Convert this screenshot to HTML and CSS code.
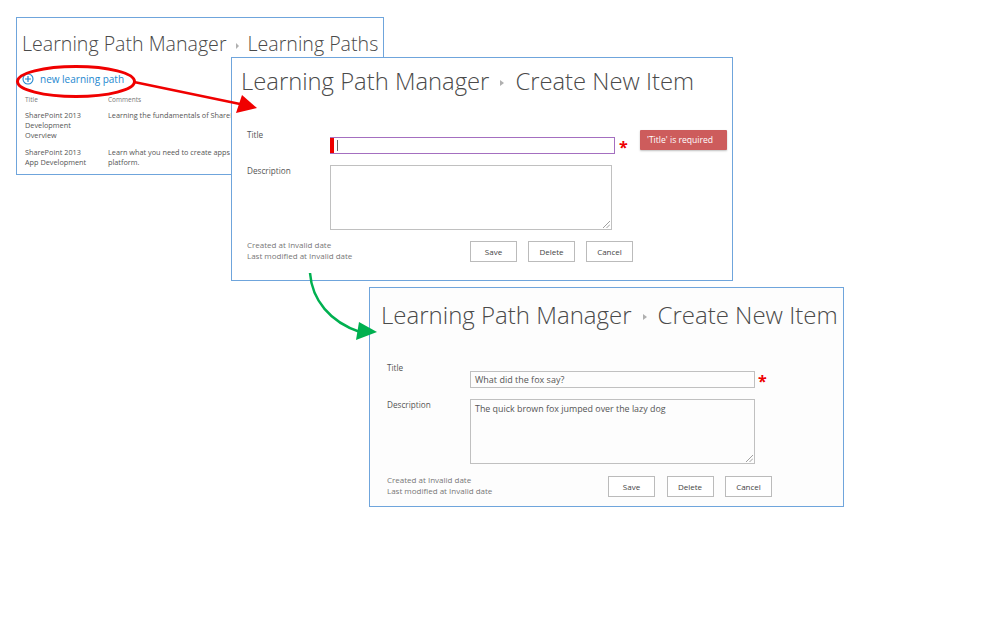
FILE: index.html
```html
<!DOCTYPE html>
<html lang="en">
<head>
<meta charset="utf-8">
<title>Learning Path Manager</title>
<link rel="stylesheet" href="styles.css">
</head>
<body>
<div class="canvas">
  <section class="win win-list">
    <h1 class="crumb"><span>Learning Path Manager</span><i class="sep"></i><span>Learning Paths</span></h1>
    <div class="new-link">
      <svg class="plus" width="12" height="12" viewBox="0 0 12 12"><circle cx="6" cy="6" r="5" fill="none" stroke="#2488cf" stroke-width="1.1"/><path d="M6 3v6M3 6h6" stroke="#2488cf" stroke-width="1.2"/></svg>
      <span>new learning path</span>
    </div>
    <div class="list">
      <div class="list-head">Title</div><div class="list-head">Comments</div>
      <div class="cell">SharePoint 2013<br>Development<br>Overview</div><div class="cell">Learning the fundamentals of SharePoint development</div>
      <div class="cell">SharePoint 2013<br>App Development</div><div class="cell">Learn what you need to create apps for the SharePoint<br>platform.</div>
    </div>
  </section>

  <section class="win win-error">
    <h1 class="crumb"><span>Learning Path Manager</span><i class="sep"></i><span>Create New Item</span></h1>
    <div class="form">
      <label class="lbl lbl-title">Title</label>
      <div class="field-row">
        <div class="input input-error"><i class="err-bar"></i><i class="caret"></i></div>
        <span class="star">*</span>
        <div class="tip">'Title' is required</div>
      </div>
      <label class="lbl">Description</label>
      <div class="area area-error"><svg class="grip" width="7" height="7" viewBox="0 0 7 7"><path d="M0 7L7 0M3.500 7L7 3.500" stroke="#888" stroke-width=".8"/></svg></div>
    </div>
    <div class="foot">
      <div class="meta">Created at Invalid date<br>Last modified at Invalid date</div>
      <div class="btns"><button class="btn">Save</button><button class="btn">Delete</button><button class="btn">Cancel</button></div>
    </div>
  </section>

  <section class="win win-ok">
    <h1 class="crumb"><span>Learning Path Manager</span><i class="sep"></i><span>Create New Item</span></h1>
    <div class="form">
      <label class="lbl lbl-title">Title</label>
      <div class="field-row">
        <div class="input">What did the fox say?</div>
        <span class="star">*</span>
      </div>
      <label class="lbl">Description</label>
      <div class="area">The quick brown fox jumped over the lazy dog<svg class="grip" width="7" height="7" viewBox="0 0 7 7"><path d="M0 7L7 0M3.500 7L7 3.500" stroke="#888" stroke-width=".8"/></svg></div>
    </div>
    <div class="foot">
      <div class="meta">Created at Invalid date<br>Last modified at Invalid date</div>
      <div class="btns"><button class="btn">Save</button><button class="btn">Delete</button><button class="btn">Cancel</button></div>
    </div>
  </section>

  <svg class="marks" width="1008" height="630" viewBox="0 0 1008 630">
    <ellipse cx="76" cy="81.500" rx="58.500" ry="15" fill="none" stroke="#f00000" stroke-width="3"/>
    <path d="M134 82L240 104" fill="none" stroke="#f00000" stroke-width="2.500"/>
    <path d="M242 95L257 108L236 113Z" fill="#f00000"/>
    <path d="M310 273C312 300 330 322 360 332" fill="none" stroke="#00b050" stroke-width="2.500"/>
    <path d="M359 322L377 332L356 340Z" fill="#00b050"/>
  </svg>
</div>
</body>
</html>
```
FILE: styles.css
```css
* { box-sizing: border-box; }
html, body { margin: 0; padding: 0; background: #fff; }
body { font-family: "Open Sans", "Liberation Sans", sans-serif; color: #444; }
.canvas { position: relative; width: 1008px; height: 630px; overflow: hidden; }

.win { position: absolute; background: #fff; border: 1px solid #6fa5dc; overflow: hidden; }
.win-list { left: 16px; top: 17px; width: 368px; height: 158px; padding: 12px 0 0 5px; }
.win-error { left: 231px; top: 57px; width: 502px; height: 224px; padding: 7px 0 0 9px; }
.win-ok { left: 369px; top: 287px; width: 475px; height: 220px; padding: 11px 0 0 11px; background: #fdfdfd; }

.crumb { display: flex; align-items: center; margin: 0; font-weight: 300; font-size: 24px; line-height: 32px; color: #4a4a4a; white-space: nowrap; }
.win-error .crumb { font-size: 23.800px; }
.win-list .crumb { font-size: 19.600px; line-height: 28px; }
.sep { width: 0; height: 0; margin: 3px 11px 0 11px; border-left: 4px solid #b0b0b0; border-top: 3px solid transparent; border-bottom: 3px solid transparent; }
.win-list .sep { margin: 3px 9px 0 9px; border-left-width: 3px; }

.new-link { display: flex; align-items: center; gap: 6px; margin-top: 13px; font-size: 10px; line-height: 16px; color: #2488cf; }

.list { display: grid; grid-template-columns: 83px 1fr; margin: 8px 0 0 3px; font-size: 7.300px; line-height: 10px; color: #555; }
.list-head { font-size: 6.500px; line-height: 9px; color: #777; margin-bottom: 6px; }
.cell { margin-bottom: 7px; white-space: nowrap; }

.form { display: grid; grid-template-columns: 83px 1fr; margin: 33px 0 0 6px; }
.lbl { font-size: 8.200px; line-height: 12px; color: #555; }
.lbl-title { margin-top: -1px; }
.win-ok .lbl-title { margin-top: -2px; }
.field-row { display: flex; align-items: flex-start; margin: 7px 0 11px; position: relative; }
.input { position: relative; width: 285px; height: 17px; border: 1px solid #c0c0c0; padding: 0 4px; font-size: 9px; line-height: 15px; color: #555; }
.input-error { border-color: #a46fc0; }
.err-bar { position: absolute; left: -1px; top: 0; bottom: 0; width: 4px; background: #ee0000; }
.caret { position: absolute; left: 6px; top: 2px; bottom: 2px; width: 1px; background: #666; }
.star { margin-left: 3px; font-size: 16px; line-height: 21px; font-weight: 700; color: #ee0000; height: 17px; }
.win-error .star { margin-left: 4px; }
.tip { position: absolute; left: 310px; top: -7px; width: 87px; height: 20px; background: #cd5c5c; color: #fff; font-size: 8.600px; line-height: 20px; padding-left: 7px; border-radius: 1px; box-shadow: 0 1px 2px rgba(0,0,0,.25); }
.area { position: relative; width: 285px; height: 65px; border: 1px solid #c0c0c0; padding: 2px 4px; font-size: 8.900px; line-height: 13px; color: #555; }
.area-error { width: 282px; }
.grip { position: absolute; right: 1px; bottom: 1px; }

.foot { display: flex; justify-content: space-between; margin: 11px 0 0 6px; }
.win-error .foot { width: 386px; }
.win-ok .foot { width: 385px; margin-top: 12px; }
.meta { margin-top: -2px; font-size: 8px; line-height: 11px; color: #777; }
.btns { display: flex; gap: 11px; }
.win-ok .btns { gap: 11.500px; }
.btn { width: 47px; height: 21px; padding: 0; font-family: inherit; font-size: 8px; color: #444; background: #fff; border: 1px solid #bbb; border-radius: 0; }

.marks { position: absolute; left: 0; top: 0; pointer-events: none; }
```
